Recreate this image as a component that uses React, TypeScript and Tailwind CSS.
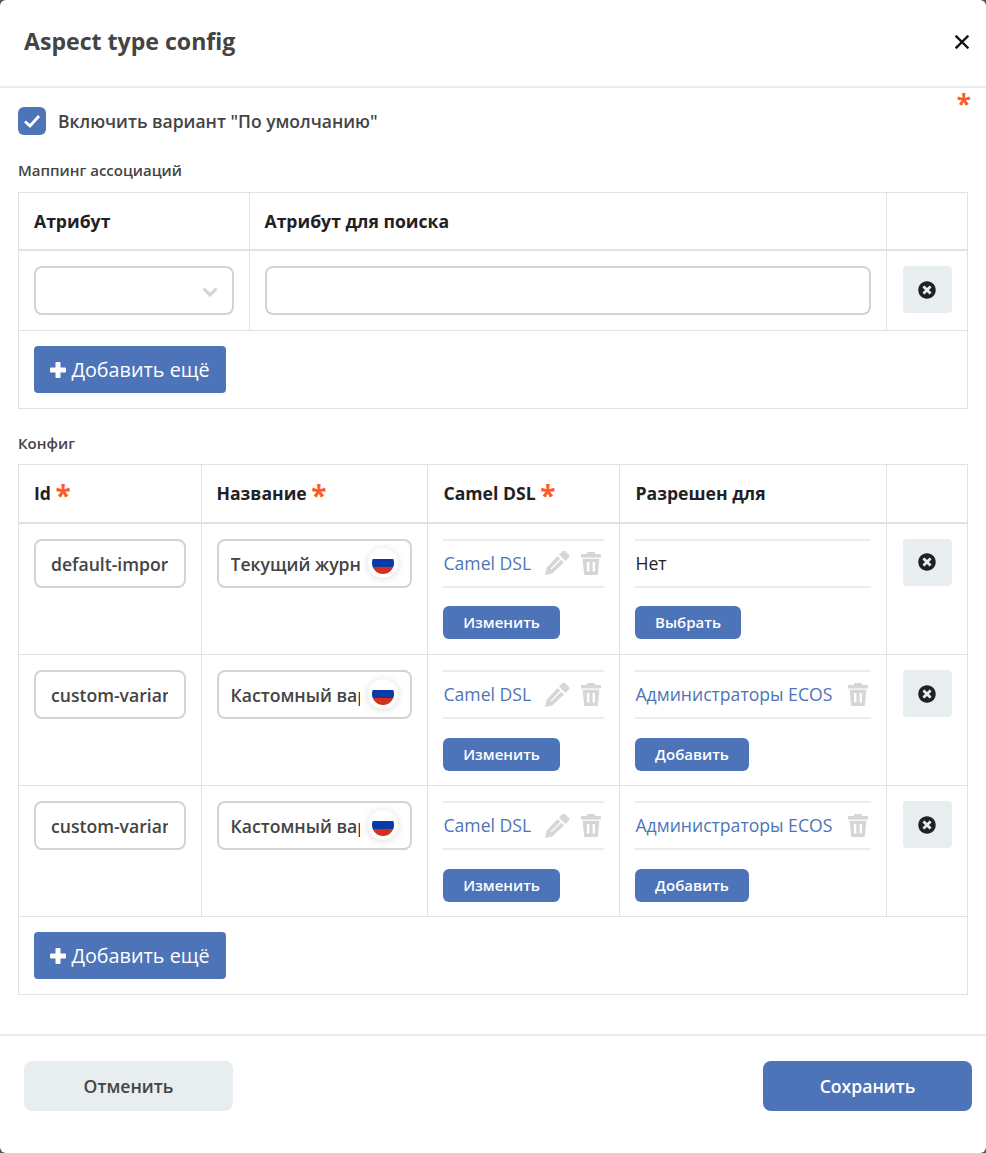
import { FaTimesCircle } from "react-icons/fa";

const FONT = "font-['Open_Sans',sans-serif]";

function Star({ className }: { className: string }) {
  return <span className={`font-bold text-[#ff5a26] ${className}`}>*</span>;
}

function HeaderStar() {
  return <Star className="align-[-6px] text-[28px] leading-[20px]" />;
}

function TrashIcon({ className }: { className: string }) {
  return (
    <svg viewBox="0 0 20 23" className={className} fill="currentColor">
      <path d="M6.5 0h7l.8 2H20v3.4H0V2h5.7z" />
      <path
        fillRule="evenodd"
        d="M1.6 6.8h16.8L16.8 23H3.2zM6 10v9.5h2.4V10zm5.6 0v9.5H14V10z"
      />
    </svg>
  );
}

function PencilIcon({ className }: { className: string }) {
  return (
    <svg viewBox="0 0 26 26" className={className} fill="currentColor">
      <path d="M15 4.5 18 1.5a2.5 2.5 0 0 1 3.5 0l3 3a2.5 2.5 0 0 1 0 3.5l-3 3z" />
      <path d="M13.5 6 20 12.5 8.3 23.5 1 25l1.8-7.5z" />
      <path d="M7 19 17 9" stroke="#fff" strokeWidth="1.2" fill="none" />
    </svg>
  );
}

function AddMore() {
  return (
    <div className="p-[15px]">
      <button className="flex h-[47px] w-[192px] items-center justify-center gap-[5px] rounded-[4px] bg-[#4d74b8] pt-px text-[19.8px] text-white">
        <svg viewBox="0 0 16 16" className="h-[16px] w-[16px]" fill="#fff">
          <path d="M6.5 0h3a1 1 0 0 1 1 1v4.5H15a1 1 0 0 1 1 1v3a1 1 0 0 1-1 1h-4.5V15a1 1 0 0 1-1 1h-3a1 1 0 0 1-1-1v-4.5H1a1 1 0 0 1-1-1v-3a1 1 0 0 1 1-1h4.5V1a1 1 0 0 1 1-1z" />
        </svg>
        Добавить ещё
      </button>
    </div>
  );
}

function RemoveButton() {
  return (
    <button className="flex h-[47px] w-[49px] items-center justify-center rounded-[4px] bg-[#e8edf0]">
      <FaTimesCircle className="h-[18px] w-[18px] text-[#1f2124]" />
    </button>
  );
}

function TextInput({ value, right = "pr-4", left = "pl-[15px]" }: { value: string; right?: string; left?: string }) {
  return (
    <input
      readOnly
      value={value}
      className={`h-[49px] w-full rounded-[8px] border-2 border-[#d3d3d3] bg-white pt-px text-[17.6px] font-semibold text-[#444] outline-none ${left} ${right}`}
    />
  );
}

function NameInput({ value }: { value: string }) {
  return (
    <div className="relative">
      <TextInput value={value} left="pl-[12px]" right="pr-[50px]" />
      <div className="absolute top-[9px] right-[14px] flex h-[30px] w-[30px] items-center justify-center rounded-full bg-white shadow-[0_1px_8px_rgba(0,0,0,0.14)]">
        <div className="flex h-[22px] w-[22px] flex-col overflow-hidden rounded-full">
          <div className="h-[7px] bg-white" />
          <div className="h-[8px] bg-[#0a3aa5]" />
          <div className="h-[7px] bg-[#d5301f]" />
        </div>
      </div>
    </div>
  );
}

function SmallButton({ label, width, first }: { label: string; width: string; first: boolean }) {
  return (
    <button
      className={`flex h-[33px] items-center justify-center rounded-[6px] bg-[#4d74b8] pl-px text-[15px] font-semibold text-white ${first ? "mt-[18px] pt-px" : "mt-[19px]"} ${width}`}
    >
      {label}
    </button>
  );
}

function Journal({ children }: { children: React.ReactNode }) {
  return (
    <div className="flex h-[49px] items-center justify-between border-y-2 border-[#e8edf0] text-[17.6px]">
      {children}
    </div>
  );
}

type Row = { id: string; name: string; allowed: string | null };

const rows: Row[] = [
  { id: "default-import", name: "Текущий журнал", allowed: null },
  { id: "custom-variant-1", name: "Кастомный вариант", allowed: "Администраторы ECOS" },
  { id: "custom-variant-2", name: "Кастомный вариант", allowed: "Администраторы ECOS" },
];

const th = "border-r border-b-2 border-[#dfe3e8] pr-[15px] text-left align-middle text-[17.6px] font-bold text-[#1f2124]";
const td = "border-r border-b border-[#dfe3e8] px-[15px] pt-[15px] align-top";

export default function App() {
  return (
    <div className={`h-[1153px] w-[986px] bg-[#555] ${FONT}`}>
      <div className="relative flex h-full flex-col rounded-[6px] bg-white">
        <div className="flex h-[88px] shrink-0 items-center justify-between border-b-2 border-[#e8edf0] pr-[17px] pb-[3px] pl-[24px]">
          <h1 className="text-[23.1px] font-bold text-[#444]">Aspect type config</h1>
          <svg viewBox="0 0 14 14" className="h-[14px] w-[14px]" stroke="#111" strokeWidth="2.4" strokeLinecap="square">
            <path d="M1.5 1.5 12.5 12.5M12.5 1.5 1.5 12.5" />
          </svg>
        </div>

        <Star className="absolute top-[88px] right-[15px] text-[26px] leading-[32px]" />

        <div className="flex-1 px-[18px]">
          <div className="mt-[19px] flex h-[28px] items-center gap-[12px]">
            <div className="flex h-[28px] w-[28px] items-center justify-center rounded-[6px] bg-[#4d74b8]">
              <svg viewBox="0 0 20 20" className="h-[20px] w-[20px]" fill="none" stroke="#fff" strokeWidth="2.8">
                <path d="M3 10.5 8 15 17 5" />
              </svg>
            </div>
            <span className="text-[17.5px] font-semibold text-[#444]">Включить вариант "По умолчанию"</span>
          </div>

          <div className="mt-[25px] text-[15px] leading-[20px] font-semibold text-[#444]">Маппинг ассоциаций</div>
          <div className="mt-[12px] border border-[#dfe3e8]">
            <table className="w-full table-fixed border-collapse">
              <colgroup>
                <col className="w-[230px]" />
                <col />
                <col className="w-[81px]" />
              </colgroup>
              <thead>
                <tr className="h-[57px]">
                  <th className={`${th} pl-[15px]`}>Атрибут</th>
                  <th className={`${th} pl-[15px]`}>Атрибут для поиска</th>
                  <th className="border-b-2 border-[#dfe3e8]" />
                </tr>
              </thead>
              <tbody>
                <tr className="h-[80px]">
                  <td className={td}>
                    <div className="flex h-[49px] items-center justify-end rounded-[8px] border-2 border-[#d3d3d3] pr-[14px]">
                      <svg viewBox="0 0 16 10" className="mt-[3px] h-[10px] w-[16px]" fill="none" stroke="#d3d3d3" strokeWidth="3">
                        <path d="M1.5 1.5 8 8l6.5-6.5" />
                      </svg>
                    </div>
                  </td>
                  <td className={td}>
                    <TextInput value="" />
                  </td>
                  <td className="border-b border-[#dfe3e8] px-[16px] pt-[15px] align-top">
                    <RemoveButton />
                  </td>
                </tr>
              </tbody>
            </table>
            <AddMore />
          </div>

          <div className="mt-[24px] text-[15px] leading-[20px] font-semibold text-[#444]">Конфиг</div>
          <div className="mt-[11px] border border-[#dfe3e8]">
            <table className="w-full table-fixed border-collapse">
              <colgroup>
                <col className="w-[182px]" />
                <col className="w-[226px]" />
                <col className="w-[192px]" />
                <col />
                <col className="w-[81px]" />
              </colgroup>
              <thead>
                <tr className="h-[58px]">
                  <th className={`${th} pl-[15px]`}>
                    Id <HeaderStar />
                  </th>
                  <th className={`${th} pl-[15px]`}>
                    Название <HeaderStar />
                  </th>
                  <th className={`${th} pl-[16px]`}>
                    Camel DSL <HeaderStar />
                  </th>
                  <th className={`${th} pl-[16px]`}>Разрешен для</th>
                  <th className="border-b-2 border-[#dfe3e8]" />
                </tr>
              </thead>
              <tbody>
                {rows.map((row, i) => (
                  <tr key={row.id} className={i === 0 ? "h-[132px]" : "h-[131px]"}>
                    <td className={td}>
                      <TextInput value={row.id} />
                    </td>
                    <td className={td}>
                      <NameInput value={row.name} />
                    </td>
                    <td className={td}>
                      <Journal>
                        <span className="pl-px text-[#4d74b8]">Camel DSL</span>
                        <span className="flex items-center gap-[11px] pr-[3px] text-[#d6d6d6]">
                          <PencilIcon className="h-[26px] w-[26px]" />
                          <TrashIcon className="h-[23px] w-[20px]" />
                        </span>
                      </Journal>
                      <SmallButton label="Изменить" width="w-[117px]" first={i === 0} />
                    </td>
                    <td className={td}>
                      <Journal>
                        {row.allowed ? (
                          <>
                            <span className="pl-px text-[#4d74b8]">{row.allowed}</span>
                            <TrashIcon className="mr-[3px] h-[23px] w-[20px] text-[#d6d6d6]" />
                          </>
                        ) : (
                          <span className="pl-px text-[#1f2124]">Нет</span>
                        )}
                      </Journal>
                      <SmallButton
                        label={row.allowed ? "Добавить" : "Выбрать"}
                        width={row.allowed ? "w-[114px]" : "w-[106px]"}
                        first={i === 0}
                      />
                    </td>
                    <td className="border-b border-[#dfe3e8] px-[16px] pt-[15px] align-top">
                      <RemoveButton />
                    </td>
                  </tr>
                ))}
              </tbody>
            </table>
            <AddMore />
          </div>
        </div>

        <div className="flex h-[119px] shrink-0 items-start justify-between border-t-2 border-[#e8edf0] px-[14px] pt-[25px] pl-[24px]">
          <button className="h-[50px] w-[209px] rounded-[8px] bg-[#e8edf0] text-[17.6px] font-semibold text-[#444]">Отменить</button>
          <button className="h-[50px] w-[209px] rounded-[8px] bg-[#4d74b8] text-[17.6px] font-semibold text-white">Сохранить</button>
        </div>
      </div>
    </div>
  );
}
